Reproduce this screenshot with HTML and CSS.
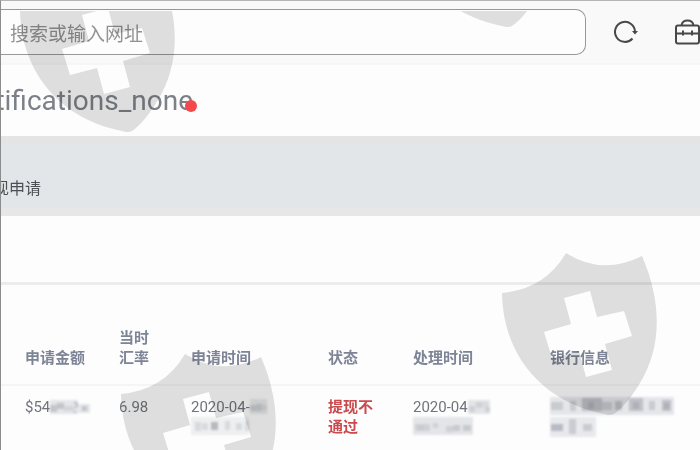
FILE: index.html
```html
<!DOCTYPE html>
<html lang="zh-CN">
<head>
<meta charset="utf-8">
<meta name="viewport" content="width=device-width, initial-scale=1">
<title>提现申请</title>
<link rel="stylesheet" href="styles.css">
</head>
<body>
<div class="page">
  <header class="browser-bar">
    <input class="address" type="text" placeholder="搜索或输入网址" aria-label="搜索或输入网址">
    <nav class="tools">
      <button class="tool" type="button" aria-label="刷新">
        <svg width="26" height="26" viewBox="0 0 26 26" fill="none" stroke="#484848" stroke-width="2"><path d="M19.500 19.500A10 10 0 1 1 22 13"/><path d="M19 12h6l-3 3.500z" fill="#484848" stroke="none"/></svg>
      </button>
      <button class="tool" type="button" aria-label="工具箱">
        <svg width="26" height="26" viewBox="0 0 26 26" fill="none" stroke="#484848" stroke-width="2"><rect x="1" y="6.500" width="23" height="18" rx="2"/><path d="M6.500 6.500C7 3 9.500 1.500 12.500 1.500S18 3 18.500 6.500M1 14.500h23M8 11.500v5M17 11.500v5" /></svg>
      </button>
    </nav>
  </header>
  <div class="app-bar">
    <button class="notice" type="button">notifications_none<span class="dot"></span></button>
  </div>
  <div class="title-band"><h1 class="title">提现申请</h1></div>
  <div class="filter-row"></div>
  <table class="records">
    <colgroup><col class="c-amount"><col class="c-rate"><col class="c-date"><col class="c-status"><col class="c-date"><col></colgroup>
    <thead>
      <tr><th>申请金额</th><th>当时<br>汇率</th><th>申请时间</th><th>状态</th><th>处理时间</th><th>银行信息</th></tr>
    </thead>
    <tbody>
      <tr>
        <td>$54<svg class="mosaic" width="42" height="16" viewBox="0 0 42 16"><path fill="#e5e6e9" d="M0 1h28v14H0zM28 5h12v9H28z"/><path fill="#c2c5c9" d="M0 6h7v7H0zM7 4h7v6H7zM32 7h5v5h-5z"/><path fill="#d3d5d9" d="M14 7h10v5H14z"/><path d="M24 4q4-1 3 3l-2 2M25 12v2" fill="none" stroke="#8b8f96" stroke-width="1"/></svg></td>
        <td>6.98</td>
        <td>2020-04-<svg class="mosaic" width="18" height="16" viewBox="0 0 18 16"><path fill="#e8e9ea" d="M0 0h17v15H0z"/><path fill="#cccfd2" d="M0 6h6v6H0zM6 5h6v7H6z"/><path fill="#d9dbdd" d="M12 6h5v5h-5z"/></svg><br><svg class="mosaic mosaic-line" width="62" height="18" viewBox="0 0 62 18"><path fill="#eeeff1" d="M0 0h58v18H0z"/><path fill="#d8dadd" d="M4 5h6v9H4zM11 6h6v7h-6zM34 4h5v9h-5zM45 6h6v7h-6zM54 4h4v10h-4z"/><path fill="#b6b9bf" d="M20 5h7v8h-7z"/></svg></td>
        <td class="rejected">提现不<br>通过</td>
        <td>2020-04<svg class="mosaic" width="24" height="16" viewBox="0 0 24 16"><path fill="#e3e4e7" d="M0 1h22v14H0z"/><path fill="#cfd1d5" d="M1 7h6v6H1zM8 3h6v6H8zM17 8h5v5h-5z"/><path fill="#d8dade" d="M14 3h6v5h-6z"/></svg><br><svg class="mosaic mosaic-line" width="62" height="18" viewBox="0 0 62 18"><path fill="#e4e5e8" d="M0 0h60v18H0z"/><path fill="#cfd1d5" d="M2 7h15v7H2zM20 6h5v5h-5zM33 9h7v6h-7z"/><path fill="#c7cacf" d="M5 8h6v5H5zM40 8h7v6h-7zM50 8h8v6h-8z"/></svg></td>
        <td><svg class="mosaic" width="124" height="18" viewBox="0 0 124 18"><path fill="#e4e6e9" d="M0 0h124v18H0z"/><path fill="#c8cbd0" d="M1 5h12v8H1zM20 4h6v10h-6zM52 5h10v8H52zM99 4h6v9h-6z"/><path fill="#bec1c6" d="M32 1h20v13H32zM65 4h7v9h-7zM79 1h14v13H79zM112 3h9v11h-9z"/><path fill="#aeb1b8" d="M38 5h6v7h-6zM83 5h6v7h-6zM114 6h5v6h-5z"/></svg><br><svg class="mosaic mosaic-line" width="46" height="20" viewBox="0 0 46 20"><path fill="#e8e9ec" d="M0 0h46v20H0z"/><path fill="#b9bac5" d="M1 7h12v7H1z"/><path fill="#c9ccd2" d="M19 2h7v15h-7zM33 7h9v7h-9z"/></svg></td>
      </tr>
    </tbody>
  </table>
  <div class="watermarks" aria-hidden="true">
    <svg width="0" height="0"><defs><path id="shield" fill-rule="evenodd" d="M76 13Q112 36 152 16C172 62 172 107 150 143Q136 166 124 174Q120 176 114 174C53 162 13 116 12 53Q55 49 76 13ZM74 58L81 84L54 92L62 118L89 111L96 137L122 130L115 104L142 96L134 71L107 77L100 51Z"/></defs></svg>
    <svg class="mark mark-search" width="180" height="180"><use href="#shield"/></svg>
    <svg class="mark mark-top" width="180" height="180"><use href="#shield"/></svg>
    <svg class="mark mark-table" width="180" height="180"><use href="#shield"/></svg>
    <svg class="mark mark-bank" width="180" height="180"><use href="#shield"/></svg>
  </div>
</div>
</body>
</html>
```
FILE: styles.css
```css
* { box-sizing: border-box; }
body {
  margin: 0;
  background: #fdfdfd;
  font-family: Roboto, "Noto Sans CJK SC", sans-serif;
  color: #6b7078;
}
.page {
  position: relative;
  min-height: 100vh;
  overflow: hidden;
  border-top: 1px solid #b5b5b5;
  border-left: 1px solid #8c8c8c;
}
button { border: 0; padding: 0; background: none; font: inherit; color: inherit; }

.browser-bar {
  display: flex;
  align-items: flex-start;
  height: 64px;
  padding-top: 8px;
  background: #f9f9f9;
  border-bottom: 2px solid #f6f6f6;
}
.address {
  flex: 1;
  min-width: 0;
  height: 46px;
  padding: 0 9px;
  border: 1px solid #979797;
  border-left: 0;
  border-radius: 0 10px 10px 0;
  background: #fdfdfd;
  font: 19px "Noto Sans CJK SC", sans-serif;
  color: #555;
}
.address::placeholder { color: #929292; opacity: 1; }
.tools {
  display: flex;
  gap: 36px;
  padding: 10px 0 0 27px;
  margin-right: -1px;
}
.tool { display: flex; }

.app-bar {
  display: flex;
  align-items: center;
  height: 71px;
}
.notice {
  position: relative;
  display: flex;
  justify-content: flex-end;
  width: 192px;
  font-size: 28px;
  line-height: 36px;
  color: #7c8189;
}
.dot {
  position: absolute;
  right: -4px;
  bottom: 7px;
  width: 12px;
  height: 12px;
  border-radius: 50%;
  background: #f4494c;
}

.title-band {
  display: flex;
  justify-content: flex-start;
  height: 80px;
  padding-top: 34px;
  border-top: 7px solid #e4e4e4;
  border-bottom: 8px solid #e7e7e7;
  background: #e2e6e9;
}
.title {
  margin: 0 0 0 -24px;
  font-size: 16px;
  line-height: 24px;
  font-weight: 400;
  color: #4d5155;
}
.filter-row {
  height: 69px;
  border-bottom: 3px solid #ececec;
}

.records {
  width: 100%;
  table-layout: fixed;
  border-collapse: collapse;
  font-size: 15px;
  line-height: 20px;
}
.c-amount { width: 118px; }
.c-rate { width: 72px; }
.c-date { width: 137px; }
.c-status { width: 85px; }
th, td { padding: 0; text-align: left; white-space: nowrap; }
th:first-child, td:first-child { padding-left: 24px; }
th {
  padding: 43px 0 16px;
  vertical-align: bottom;
  font-weight: 700;
  color: #7d8496;
  border-bottom: 2px solid #f5f5f5;
}
td {
  padding-top: 11px;
  vertical-align: top;
  color: #70757b;
}
td.rejected { color: #cb4a4e; font-weight: 700; }
.mosaic { vertical-align: -3px; filter: blur(1px); }
.mosaic-line { vertical-align: top; }

.watermarks {
  position: absolute;
  inset: 10px 0 0 0;
  overflow: hidden;
  pointer-events: none;
  mix-blend-mode: multiply;
}
.mark { position: absolute; fill: #e0e0e0; }
.mark-search { left: 7px; top: -54px; }
.mark-top { left: 387px; top: -159px; }
.mark-table { left: 108px; top: 330px; }
.mark-bank { left: 489px; top: 229px; }
```
